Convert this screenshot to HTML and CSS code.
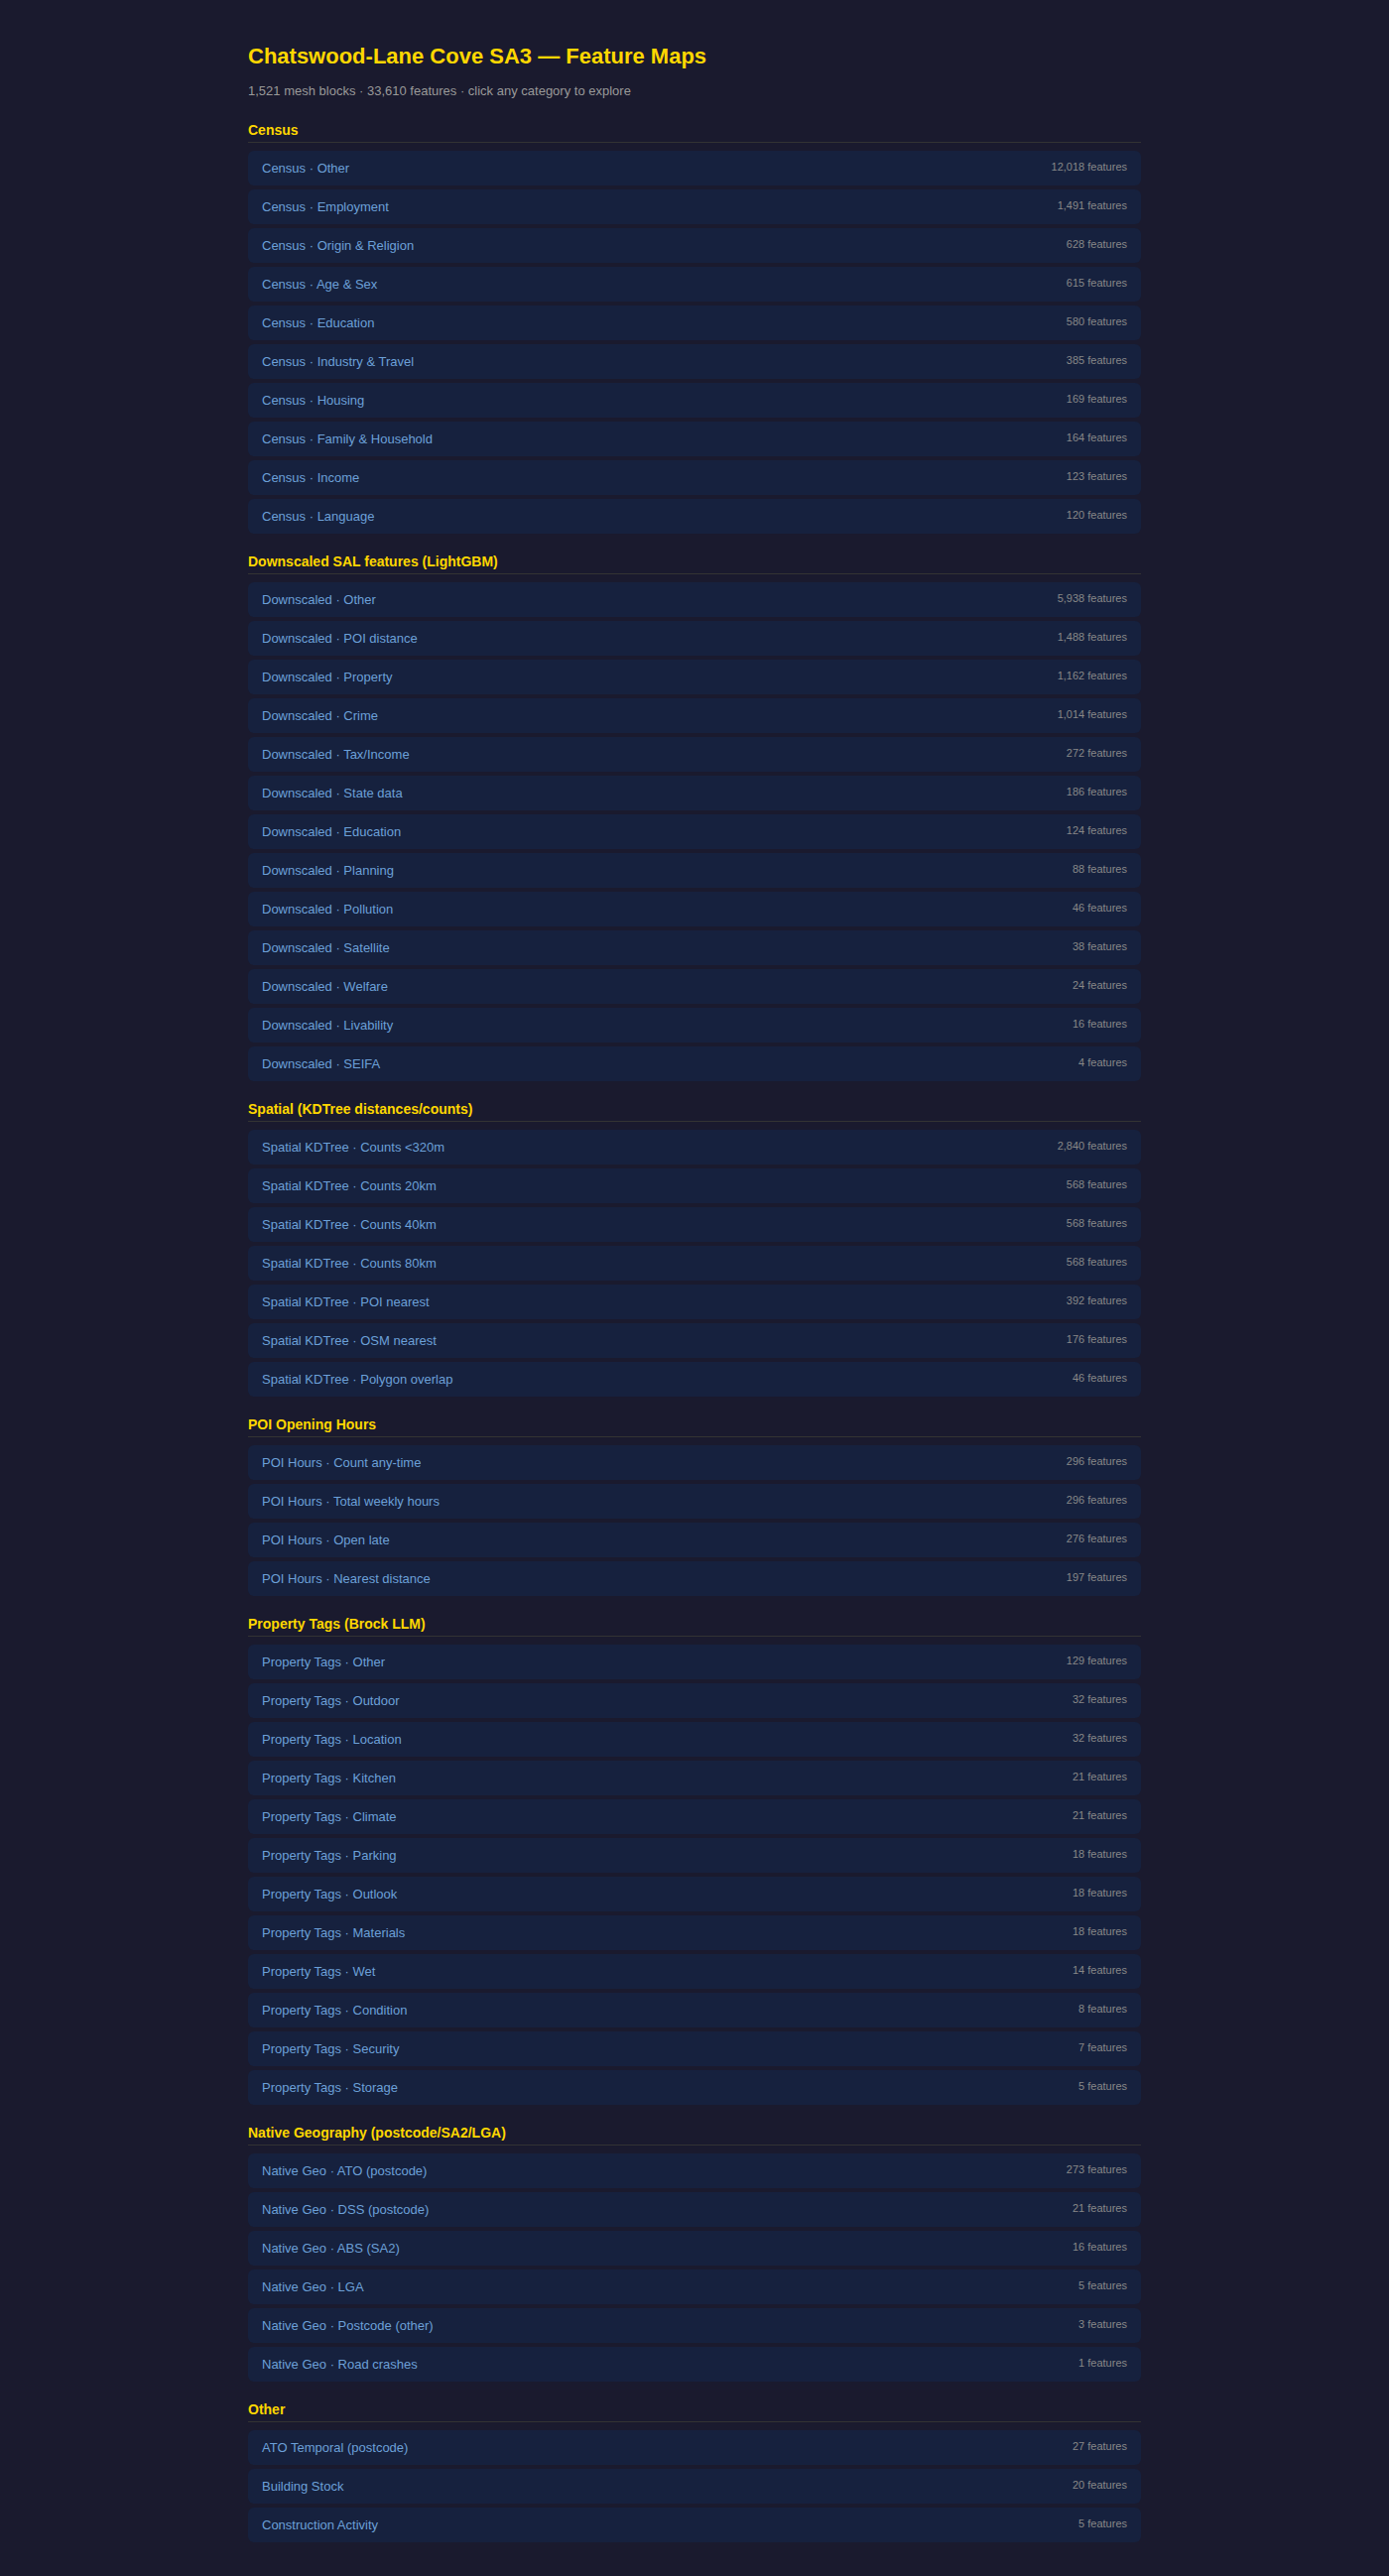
FILE: index.html
```html
<!DOCTYPE html>
<html>
	<head>
		<meta charset="utf-8">
		<title>Chatswood-Lane Cove SA3 — Feature Maps</title>
		<link rel="stylesheet" href="styles.css">
	</head>
	<body>

		<div class="page">
			<h1>Chatswood-Lane Cove SA3 — Feature Maps</h1>
			<p class="sub">1,521 mesh blocks · 33,610 features · click any category to explore</p>

			<section>
				<h2>Census</h2>
				<div class="cats">
					<a href="#"><span>Census · Other</span><span class="count">12,018 features</span></a>
					<a href="#"><span>Census · Employment</span><span class="count">1,491 features</span></a>
					<a href="#"><span>Census · Origin &amp; Religion</span><span class="count">628 features</span></a>
					<a href="#"><span>Census · Age &amp; Sex</span><span class="count">615 features</span></a>
					<a href="#"><span>Census · Education</span><span class="count">580 features</span></a>
					<a href="#"><span>Census · Industry &amp; Travel</span><span class="count">385 features</span></a>
					<a href="#"><span>Census · Housing</span><span class="count">169 features</span></a>
					<a href="#"><span>Census · Family &amp; Household</span><span class="count">164 features</span></a>
					<a href="#"><span>Census · Income</span><span class="count">123 features</span></a>
					<a href="#"><span>Census · Language</span><span class="count">120 features</span></a>
				</div>
			</section>

			<section>
				<h2>Downscaled SAL features (LightGBM)</h2>
				<div class="cats">
					<a href="#"><span>Downscaled · Other</span><span class="count">5,938 features</span></a>
					<a href="#"><span>Downscaled · POI distance</span><span class="count">1,488 features</span></a>
					<a href="#"><span>Downscaled · Property</span><span class="count">1,162 features</span></a>
					<a href="#"><span>Downscaled · Crime</span><span class="count">1,014 features</span></a>
					<a href="#"><span>Downscaled · Tax/Income</span><span class="count">272 features</span></a>
					<a href="#"><span>Downscaled · State data</span><span class="count">186 features</span></a>
					<a href="#"><span>Downscaled · Education</span><span class="count">124 features</span></a>
					<a href="#"><span>Downscaled · Planning</span><span class="count">88 features</span></a>
					<a href="#"><span>Downscaled · Pollution</span><span class="count">46 features</span></a>
					<a href="#"><span>Downscaled · Satellite</span><span class="count">38 features</span></a>
					<a href="#"><span>Downscaled · Welfare</span><span class="count">24 features</span></a>
					<a href="#"><span>Downscaled · Livability</span><span class="count">16 features</span></a>
					<a href="#"><span>Downscaled · SEIFA</span><span class="count">4 features</span></a>
				</div>
			</section>

			<section>
				<h2>Spatial (KDTree distances/counts)</h2>
				<div class="cats">
					<a href="#"><span>Spatial KDTree · Counts &lt;320m</span><span class="count">2,840 features</span></a>
					<a href="#"><span>Spatial KDTree · Counts 20km</span><span class="count">568 features</span></a>
					<a href="#"><span>Spatial KDTree · Counts 40km</span><span class="count">568 features</span></a>
					<a href="#"><span>Spatial KDTree · Counts 80km</span><span class="count">568 features</span></a>
					<a href="#"><span>Spatial KDTree · POI nearest</span><span class="count">392 features</span></a>
					<a href="#"><span>Spatial KDTree · OSM nearest</span><span class="count">176 features</span></a>
					<a href="#"><span>Spatial KDTree · Polygon overlap</span><span class="count">46 features</span></a>
				</div>
			</section>

			<section>
				<h2>POI Opening Hours</h2>
				<div class="cats">
					<a href="#"><span>POI Hours · Count any-time</span><span class="count">296 features</span></a>
					<a href="#"><span>POI Hours · Total weekly hours</span><span class="count">296 features</span></a>
					<a href="#"><span>POI Hours · Open late</span><span class="count">276 features</span></a>
					<a href="#"><span>POI Hours · Nearest distance</span><span class="count">197 features</span></a>
				</div>
			</section>

			<section>
				<h2>Property Tags (Brock LLM)</h2>
				<div class="cats">
					<a href="#"><span>Property Tags · Other</span><span class="count">129 features</span></a>
					<a href="#"><span>Property Tags · Outdoor</span><span class="count">32 features</span></a>
					<a href="#"><span>Property Tags · Location</span><span class="count">32 features</span></a>
					<a href="#"><span>Property Tags · Kitchen</span><span class="count">21 features</span></a>
					<a href="#"><span>Property Tags · Climate</span><span class="count">21 features</span></a>
					<a href="#"><span>Property Tags · Parking</span><span class="count">18 features</span></a>
					<a href="#"><span>Property Tags · Outlook</span><span class="count">18 features</span></a>
					<a href="#"><span>Property Tags · Materials</span><span class="count">18 features</span></a>
					<a href="#"><span>Property Tags · Wet</span><span class="count">14 features</span></a>
					<a href="#"><span>Property Tags · Condition</span><span class="count">8 features</span></a>
					<a href="#"><span>Property Tags · Security</span><span class="count">7 features</span></a>
					<a href="#"><span>Property Tags · Storage</span><span class="count">5 features</span></a>
				</div>
			</section>

			<section>
				<h2>Native Geography (postcode/SA2/LGA)</h2>
				<div class="cats">
					<a href="#"><span>Native Geo · ATO (postcode)</span><span class="count">273 features</span></a>
					<a href="#"><span>Native Geo · DSS (postcode)</span><span class="count">21 features</span></a>
					<a href="#"><span>Native Geo · ABS (SA2)</span><span class="count">16 features</span></a>
					<a href="#"><span>Native Geo · LGA</span><span class="count">5 features</span></a>
					<a href="#"><span>Native Geo · Postcode (other)</span><span class="count">3 features</span></a>
					<a href="#"><span>Native Geo · Road crashes</span><span class="count">1 features</span></a>
				</div>
			</section>

			<section>
				<h2>Other</h2>
				<div class="cats">
					<a href="#"><span>ATO Temporal (postcode)</span><span class="count">27 features</span></a>
					<a href="#"><span>Building Stock</span><span class="count">20 features</span></a>
					<a href="#"><span>Construction Activity</span><span class="count">5 features</span></a>
				</div>
			</section>
		</div>

	</body>
</html>
```

FILE: styles.css
```css
* {
	box-sizing: border-box;
}

body {
	margin: 0;
	background-color: #1a1a2e;
	color: #ddd;
	font-family: "Liberation Sans", Arial, Helvetica, sans-serif;
}

.page {
	max-width: 900px;
	margin: 0 auto;
	padding: 44px 0 30px;
}

h1 {
	margin: 0 0 14px;
	font-size: 22px;
	color: #ffd700;
}

.sub {
	margin: 0 0 24px;
	font-size: 13px;
	color: #999;
}

h2 {
	margin: 20px 0 8px;
	padding-bottom: 4px;
	border-bottom: 1px solid #333;
	font-size: 14px;
	color: #ffd700;
}

/* category list */
.cats {
	display: flex;
	flex-direction: column;
	gap: 4px;
}

.cats>a {
	display: flex;
	justify-content: space-between;
	padding: 10px 14px;
	border-radius: 6px;
	background-color: #16213e;
	color: #6ca0d8;
	font-size: 13px;
	text-decoration: none;
}

.cats>a>.count {
	font-size: 11px;
	color: #888;
}
```
